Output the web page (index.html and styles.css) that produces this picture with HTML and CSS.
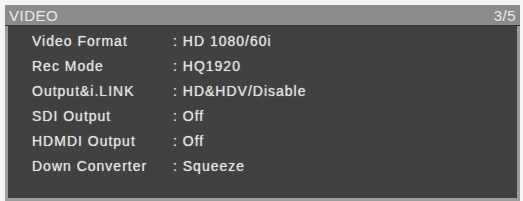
FILE: index.html
```html
<!DOCTYPE html>
<html lang="en">
<head>
    <meta charset="UTF-8">
    <title>VIDEO</title>
    <link rel="stylesheet" href="styles.css">
</head>
<body>
    <div class="screen">
        <div class="title-bar">
            <span class="title">VIDEO</span>
            <span class="page">3/5</span>
        </div>
        <div class="menu">
            <div class="row"><span class="label">Video Format</span><span class="value">: HD 1080/60i</span></div>
            <div class="row"><span class="label">Rec Mode</span><span class="value">: HQ1920</span></div>
            <div class="row"><span class="label">Output&amp;i.LINK</span><span class="value">: HD&amp;HDV/Disable</span></div>
            <div class="row"><span class="label">SDI Output</span><span class="value">: Off</span></div>
            <div class="row"><span class="label">HDMDI Output</span><span class="value">: Off</span></div>
            <div class="row"><span class="label">Down Converter</span><span class="value">: Squeeze</span></div>
        </div>
    </div>
</body>
</html>
```

FILE: styles.css
```css
body {
    margin: 0;
    background-color: #f4f4f4;
    font-family: "Liberation Sans", Arial, sans-serif;
}
.screen {
    margin: 5px 3px 0 5px;
    border: 3px solid #9c9c9c;
    border-top: 0;
    background-color: #414141;
    height: 193px;
}
.title-bar {
    display: flex;
    justify-content: space-between;
    align-items: center;
    height: 20px;
    padding: 0 4px 0 1px;
    margin: 0 -3px;
    background-color: #8b8b8b;
    color: #ececec;
    font-size: 15px;
    letter-spacing: 0.5px;
    border-bottom: 1px solid #353535;
}
.title {
    padding-left: 3px;
}
.menu {
    padding: 3px 0 0 24px;
}
.row {
    display: flex;
    height: 25px;
    line-height: 25px;
    font-size: 14px;
    letter-spacing: 1px;
    color: #e2e2e2;
    text-shadow: 0 0 1px #bbbbbb;
}
.label {
    width: 141px;
}
```
